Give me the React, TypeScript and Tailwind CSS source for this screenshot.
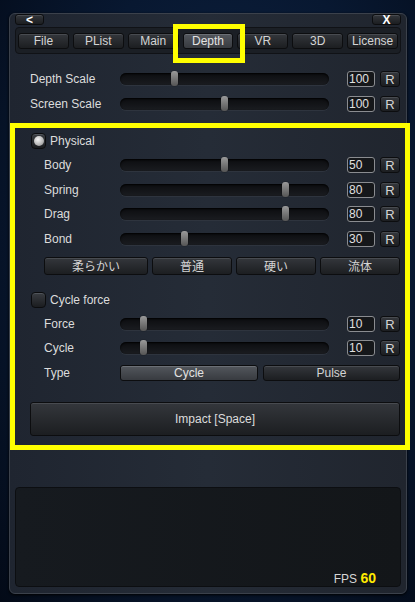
import React from "react";

const font = { fontFamily: '"Liberation Sans", Arial, "Noto Sans CJK JP", sans-serif' };

const tabs = ["File", "PList", "Main", "Depth", "VR", "3D", "License"];

const Btn = ({ children, className = "", active = false }: { children: React.ReactNode; className?: string; active?: boolean }) => (
  <div
    className={
      "flex items-center justify-center rounded-[3px] border border-[#0c0d0f] text-[12px] leading-none " +
      (active
        ? "bg-gradient-to-b from-[#53575d] to-[#383b40] text-[#e2e2e2] shadow-[inset_0_1px_0_#6b6f75] "
        : "bg-gradient-to-b from-[#34373c] to-[#1c1e21] text-[#d4d4d4] shadow-[inset_0_1px_0_#484b50] ") +
      className
    }
  >
    {children}
  </div>
);

const Slider = ({ f }: { f: number }) => (
  <div className="relative w-[209px] h-[12px] rounded-full bg-gradient-to-b from-[#0c0d10] to-[#1a1c20] shadow-[inset_0_1px_2px_#000,0_1px_0_#2e343e]">
    <div
      className="absolute top-[-2px] w-[7px] h-[15px] rounded-[3px] bg-gradient-to-b from-[#9a9a9a] via-[#777] to-[#555] shadow-[0_0_1px_#000]"
      style={{ left: `${f * 202}px` }}
    />
  </div>
);

const Row = ({ label, value, f, labelW, className = "" }: { label: string; value: string; f: number; labelW: string; className?: string }) => (
  <div className={"flex items-center h-[16px] " + className}>
    <div className={"text-[12px] text-[#dcdcdc] " + labelW}>{label}</div>
    <Slider f={f} />
    <div className="ml-[18px] w-[28px] h-[16px] rounded-[3px] border border-[#8a8c90] bg-[#15171a] text-[12px] leading-[14px] pl-[1px] text-[#e0e0e0]">
      {value}
    </div>
    <Btn className="ml-[5px] w-[20px] h-[16px] text-[13px]">R</Btn>
  </div>
);

const Check = ({ on }: { on?: boolean }) => (
  <div className="w-[15px] h-[16px] rounded-[4px] border border-[#0b0c0e] bg-gradient-to-b from-[#3a3d42] to-[#1b1d20] shadow-[inset_0_1px_0_#50545a] flex items-center justify-center">
    {on && <div className="w-[10px] h-[10px] rounded-full bg-[radial-gradient(circle_at_40%_35%,#f4f4f4,#b9b9b9_55%,#7d7d7d)]" />}
  </div>
);

export default function App() {
  return (
    <div
      className="w-[415px] h-[602px] overflow-hidden bg-[radial-gradient(ellipse_at_55%_40%,#0f2444_0%,#081831_55%,#030a17_100%)] pt-[13px]"
      style={font}
    >
      <div className="ml-[9px] w-[398px] rounded-[6px] border border-[#3b414b] bg-gradient-to-r from-[#1f2530] via-[#252c37] to-[#20252e] px-[5px] pb-[6px] shadow-[0_1px_3px_#000]">
        {/* top bar */}
        <div className="flex justify-between h-[11px]">
          <Btn className="w-[29px] h-[11px] font-bold text-white text-[12px]">&lt;</Btn>
          <Btn className="w-[29px] h-[11px] font-bold text-white text-[12px]">X</Btn>
        </div>

        {/* tabs */}
        <div className="mt-[2px] h-[27px] rounded-[4px] border border-[#101216] bg-[#1b1f25] flex items-center gap-[4px] px-[2px]">
          {tabs.map((t) => (
            <div key={t} className="relative flex-1">
              <Btn className="h-[16px]" active={t === "Depth"}>
                {t}
              </Btn>
              {t === "Depth" && (
                <span className="absolute -left-[10px] -right-[12px] -top-[9px] -bottom-[14px] border-[5px] border-[#ffff00] z-10 pointer-events-none" />
              )}
            </div>
          ))}
        </div>

        <Row className="mt-[17px]" label="Depth Scale" value="100" f={0.25} labelW="w-[90px] pl-[15px] box-content" />
        <Row className="mt-[9px]" label="Screen Scale" value="100" f={0.5} labelW="w-[90px] pl-[15px] box-content" />

        {/* highlighted section */}
        <div className="mt-[11px] -ml-[5px] -mr-[9px] border-[5px] border-[#ffff00] pt-[5px] pb-[9px]">
          <div className="flex items-center pl-[16px] h-[16px]">
            <Check on />
            <span className="ml-[4px] text-[12px] text-[#dcdcdc]">Physical</span>
          </div>
          <Row className="mt-[8px]" label="Body" value="50" f={0.5} labelW="w-[76px] ml-[29px]" />
          <Row className="mt-[9px]" label="Spring" value="80" f={0.8} labelW="w-[76px] ml-[29px]" />
          <Row className="mt-[8px]" label="Drag" value="80" f={0.8} labelW="w-[76px] ml-[29px]" />
          <Row className="mt-[9px]" label="Bond" value="30" f={0.3} labelW="w-[76px] ml-[29px]" />

          <div className="mt-[10px] ml-[29px] flex gap-[4px] w-[356px]" style={{ fontFamily: '"Noto Sans CJK JP", sans-serif' }}>
            <Btn className="w-[104px] h-[18px] text-[11px] text-[#bdbdbd]">柔らかい</Btn>
            <Btn className="flex-1 h-[18px] text-[11px] text-[#bdbdbd]">普通</Btn>
            <Btn className="flex-1 h-[18px] text-[11px] text-[#bdbdbd]">硬い</Btn>
            <Btn className="flex-1 h-[18px] text-[11px] text-[#bdbdbd]">流体</Btn>
          </div>

          <div className="mt-[17px] flex items-center pl-[16px] h-[16px]">
            <Check />
            <span className="ml-[4px] text-[12px] text-[#dcdcdc]">Cycle force</span>
          </div>
          <Row className="mt-[8px]" label="Force" value="10" f={0.1} labelW="w-[76px] ml-[29px]" />
          <Row className="mt-[8px]" label="Cycle" value="10" f={0.1} labelW="w-[76px] ml-[29px]" />

          <div className="mt-[9px] flex items-center h-[16px]">
            <div className="w-[76px] ml-[29px] text-[12px] text-[#dcdcdc]">Type</div>
            <div className="flex gap-[5px] w-[280px]">
              <Btn active className="w-[138px] h-[16px]">Cycle</Btn>
              <Btn className="flex-1 h-[16px]">Pulse</Btn>
            </div>
          </div>

          <Btn className="mt-[21px] ml-[15px] w-[370px] h-[34px] text-[#dcdcdc]">Impact [Space]</Btn>
        </div>

        {/* log area */}
        <div className="mt-[37px] h-[100px] rounded-[4px] border border-[#0c0e11] bg-gradient-to-r from-[#161a1f] to-[#131619] flex items-end justify-end pr-[24px]">
          <span className="text-[12px] text-[#d6d6d6] leading-[14px]">
            FPS <span className="text-[14px] font-bold text-[#ffea00]">60</span>
          </span>
        </div>
      </div>
    </div>
  );
}
